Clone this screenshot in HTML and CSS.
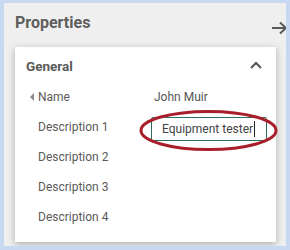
FILE: index.html
```html
<!DOCTYPE html>
<html lang="en">

<head>
  <meta charset="UTF-8">
  <meta name="viewport" content="width=device-width, initial-scale=1.0">
  <title>Properties</title>
  <link rel="stylesheet" href="styles.css">
</head>

<body>

  <div class="panel">
    <div class="panel-header">
      <h1>Properties</h1>
      <svg class="collapse" width="17" height="14" viewBox="0 0 17 14">
        <path d="M1 7 H15 M9 1.5 L15 7 L9 12.5" fill="none" stroke="#5a5a5a" stroke-width="2"/>
      </svg>
    </div>

    <div class="card">
      <div class="card-header">
        <h2>General</h2>
        <svg class="chevron" width="12" height="8" viewBox="0 0 12 8">
          <path d="M1 7 L6 2 L11 7" fill="none" stroke="#555" stroke-width="2"/>
        </svg>
      </div>

      <div class="rows">
        <div class="row">
          <div class="label"><span class="marker"></span>Name</div>
          <div class="value">John Muir</div>
        </div>
        <div class="row">
          <div class="label">Description 1</div>
          <div class="value editing">
            <div class="field">
              <span class="caret">Equipment tester</span>
              <!-- annotation ring -->
              <svg class="ring" width="141" height="43" viewBox="0 0 141 43">
                <ellipse cx="70.5" cy="21.5" rx="67.5" ry="19" fill="none" stroke="#a81f2b" stroke-width="3"/>
              </svg>
            </div>
          </div>
        </div>
        <div class="row">
          <div class="label">Description 2</div>
          <div class="value"></div>
        </div>
        <div class="row">
          <div class="label">Description 3</div>
          <div class="value"></div>
        </div>
        <div class="row">
          <div class="label">Description 4</div>
          <div class="value"></div>
        </div>
      </div>
    </div>
  </div>

</body>

</html>
```

FILE: styles.css
```css
* {
  margin: 0;
  padding: 0;
  box-sizing: border-box;
}

body {
  font-family: Roboto, "Liberation Sans", sans-serif;
  background-color: #c7d9f1;
  color: #5a5a5a;
  padding: 3px 4px 4px 4px;
}

.panel {
  background-color: #efefef;
  width: 282px;
  height: 243px;
  overflow: hidden;
}

.panel-header {
  display: flex;
  align-items: center;
  justify-content: space-between;
  height: 44px;
  padding: 0 0 6px 11px;
}

h1 {
  font-size: 16px;
  font-weight: 700;
  color: #5e5e5e;
}

.collapse {
  margin-top: 12px;
  margin-right: -2px;
}

.card {
  background-color: white;
  margin-left: 11px;
  width: 261px;
  height: 195px;
  box-shadow: 0 2px 7px rgba(0, 0, 0, 0.28);
}

.card-header {
  display: flex;
  align-items: center;
  justify-content: space-between;
  height: 35px;
  padding: 3px 14px 0 11px;
}

h2 {
  font-size: 13.5px;
  font-weight: 700;
  color: #5a5a5a;
}

.chevron {
  margin-top: -3px;
}

.row {
  display: grid;
  grid-template-columns: 113px 1fr;
  align-items: center;
  height: 30px;
  padding-left: 23px;
  font-size: 12px;
  color: #5a5a5a;
}

.label {
  position: relative;
}

.marker {
  position: absolute;
  left: -8px;
  top: 3px;
  border-style: solid;
  border-width: 4px 4px 4px 0;
  border-color: transparent #8a8a8a transparent transparent;
}

.value {
  padding-left: 3px;
  color: #555;
}

.editing {
  padding-left: 0;
}

.field {
  position: relative;
  width: 116px;
  height: 24px;
  margin-top: 4px;
  border: 1px solid #2c6e5e;
  border-radius: 2px;
  padding: 0 0 0 10px;
  display: flex;
  align-items: center;
  color: #444;
}

.caret {
  border-right: 1px solid #222;
  padding-right: 1px;
  line-height: 16px;
}

.ring {
  position: absolute;
  left: -14.5px;
  top: -9px;
}
```
